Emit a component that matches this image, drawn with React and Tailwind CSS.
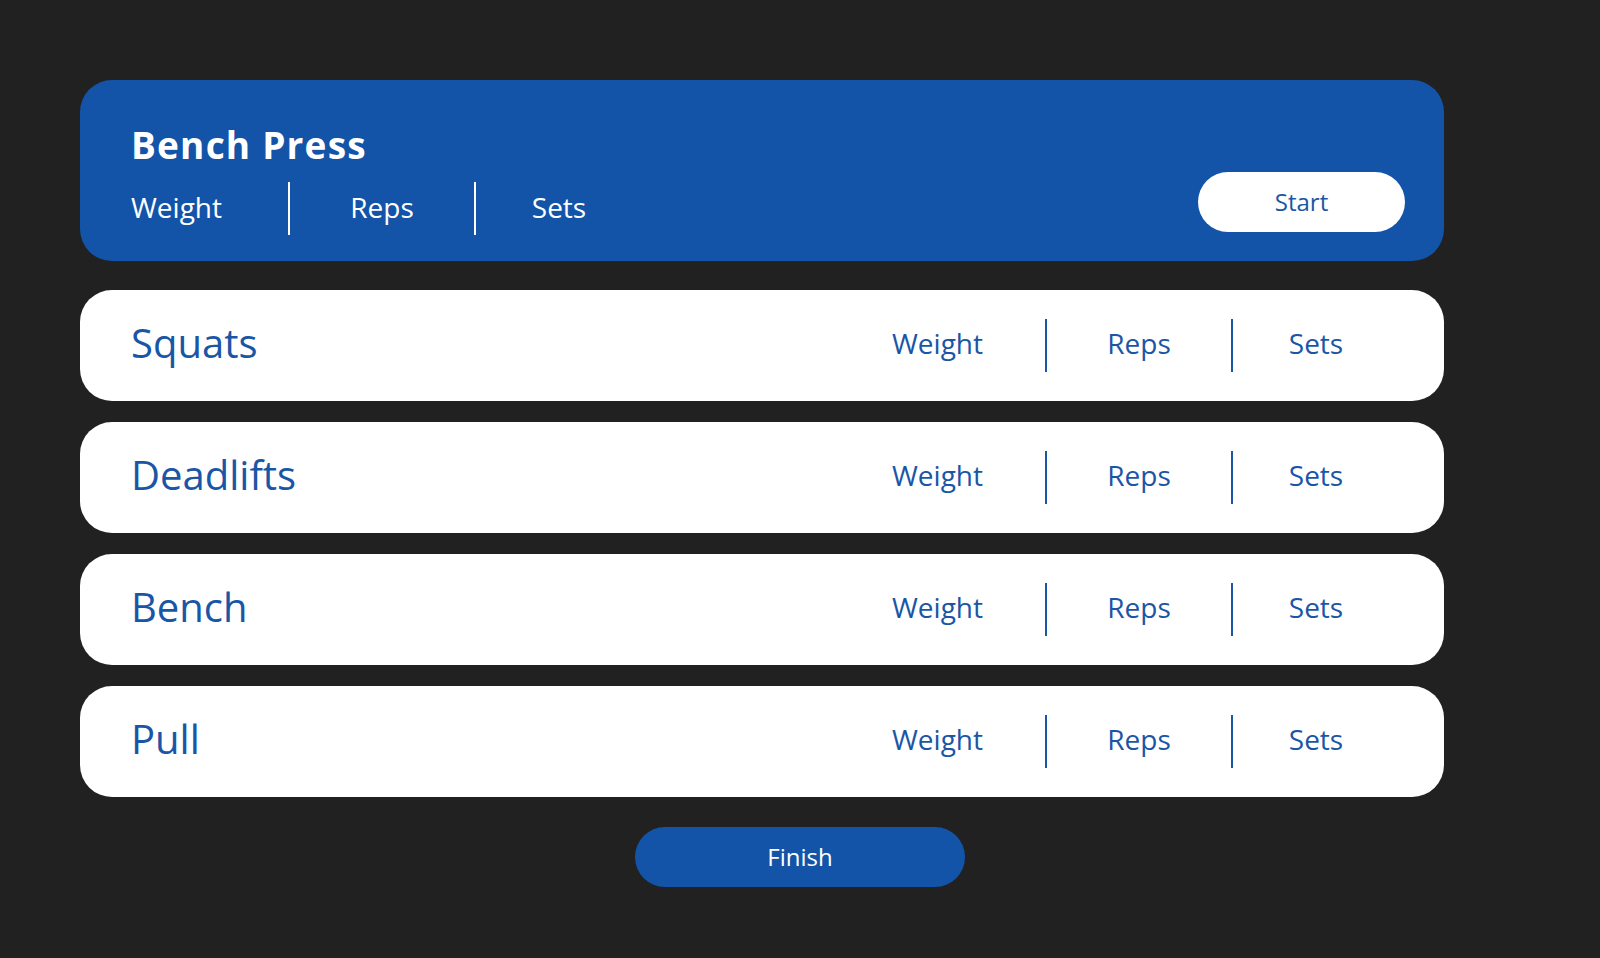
import React from 'react';

const exercises = ['Squats', 'Deadlifts', 'Bench', 'Pull'];

const font = { fontFamily: '"Open Sans", Lato, sans-serif' };

const StatCells = ({ light }) => {
    const sep = light ? 'bg-white' : 'bg-[#1a56a6]';
    const text = light ? 'text-white' : 'text-[#1a56a6]';
    return (
        <div className={`flex items-center h-[53px] text-[28px] ${text}`}>
            <div className={light ? 'w-[157px] text-left pb-[4px]' : 'w-[215px] text-center pb-[5px]'}>Weight</div>
            <div className={`w-[2px] h-[53px] ${sep}`} />
            <div className={`w-[184px] text-center ${light ? 'pb-[4px]' : 'pb-[5px]'}`}>Reps</div>
            <div className={`w-[2px] h-[53px] ${sep}`} />
            <div className={`w-[166px] text-center ${light ? 'pb-[4px]' : 'pb-[5px]'}`}>Sets</div>
        </div>
    );
};

const App = () => {
    return (
        <div className="min-h-screen w-full bg-[#212121] pt-[80px] pb-[71px]" style={font}>
            <div className="ml-[80px] w-[1364px] flex flex-col">
                {/* Current exercise */}
                <div className="h-[181px] rounded-[32px] bg-[#1354a8] pl-[51px] pr-[39px] pt-[46px] flex flex-col">
                    <h1 className="text-[37px] leading-[38px] font-bold tracking-[1.2px] text-white">Bench Press</h1>
                    <div className="mt-[8px] flex items-end justify-between">
                        <StatCells light />
                        <button className="mb-[3px] w-[207px] h-[60px] rounded-full bg-white text-[#1a56a6] text-[24px]">
                            Start
                        </button>
                    </div>
                </div>

                {/* Up next */}
                <div className="mt-[29px] flex flex-col gap-[21px]">
                    {exercises.map((name) => (
                        <div key={name} className="h-[111px] rounded-[32px] bg-white pl-[51px] pr-[45px] flex items-center justify-between">
                            <span className="text-[40px] text-[#1a56a6] pb-[5px]">{name}</span>
                            <StatCells />
                        </div>
                    ))}
                </div>
            </div>

            <div className="mt-[30px] flex justify-center">
                <button className="w-[330px] h-[60px] rounded-full bg-[#1354a8] text-white text-[24px]">
                    Finish
                </button>
            </div>
        </div>
    );
};

export default App;
